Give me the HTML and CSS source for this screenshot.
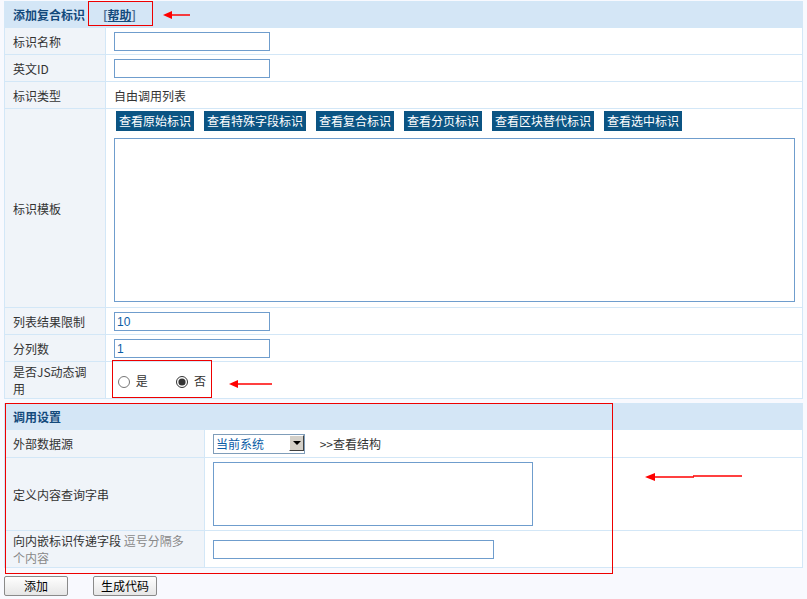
FILE: index.html
```html
<!DOCTYPE html>
<html lang="zh-CN">
<head>
    <meta charset="UTF-8">
    <title>添加复合标识</title>
    <link rel="stylesheet" href="styles.css">
</head>
<body>
<div class="page">
    <!-- 基本信息 -->
    <table class="form-table">
        <colgroup><col class="c-label"><col></colgroup>
        <tr class="head">
            <th colspan="2">添加复合标识<span class="help">[<a href="#">帮助</a>]</span></th>
        </tr>
        <tr>
            <td class="label">标识名称</td>
            <td><input type="text" class="txt"></td>
        </tr>
        <tr>
            <td class="label">英文ID</td>
            <td><input type="text" class="txt"></td>
        </tr>
        <tr>
            <td class="label">标识类型</td>
            <td>自由调用列表</td>
        </tr>
        <tr>
            <td class="label">标识模板</td>
            <td class="tpl">
                <div class="tpl-btns">
                    <a href="#" class="tag-btn">查看原始标识</a>
                    <a href="#" class="tag-btn">查看特殊字段标识</a>
                    <a href="#" class="tag-btn">查看复合标识</a>
                    <a href="#" class="tag-btn">查看分页标识</a>
                    <a href="#" class="tag-btn">查看区块替代标识</a>
                    <a href="#" class="tag-btn">查看选中标识</a>
                </div>
                <textarea class="tpl-area"></textarea>
            </td>
        </tr>
        <tr>
            <td class="label">列表结果限制</td>
            <td><input type="text" class="txt" value="10"></td>
        </tr>
        <tr>
            <td class="label">分列数</td>
            <td><input type="text" class="txt" value="1"></td>
        </tr>
        <tr class="tall">
            <td class="label">是否JS动态调用</td>
            <td class="radios">
                <label><input type="radio" name="isjs"> 是</label>
                <label><input type="radio" name="isjs" checked> 否</label>
            </td>
        </tr>
    </table>

    <!-- 调用设置 -->
    <table class="form-table call-table">
        <colgroup><col class="c-label2"><col></colgroup>
        <tr class="head">
            <th colspan="2">调用设置</th>
        </tr>
        <tr class="src-row">
            <td class="label">外部数据源</td>
            <td>
                <span class="sel">
                    <select><option>当前系统</option></select>
                    <span class="sel-arrow"></span>
                </span>
                <a href="#" class="struct">&gt;&gt;查看结构</a>
            </td>
        </tr>
        <tr class="query-row">
            <td class="label">定义内容查询字串</td>
            <td><textarea class="query-area"></textarea></td>
        </tr>
        <tr class="pass-row">
            <td class="label">向内嵌标识传递字段 <span class="hint">逗号分隔多</span><br><span class="hint">个内容</span></td>
            <td><input type="text" class="txt long"></td>
        </tr>
    </table>

    <div class="actions">
        <button class="btn">添加</button>
        <button class="btn">生成代码</button>
    </div>

    <!-- 标注 -->
    <div class="mark mark-help"></div>
    <div class="mark mark-radio"></div>
    <div class="mark mark-call"></div>
    <svg class="arrow arrow-help" width="28" height="10" viewBox="0 0 28 10">
        <path d="M0 5 L9 1 L9 9 Z" fill="#f00"/>
        <line x1="8" y1="5" x2="27" y2="5" stroke="#f00" stroke-width="1.5"/>
    </svg>
    <svg class="arrow arrow-radio" width="44" height="10" viewBox="0 0 44 10">
        <path d="M0 5 L9 1 L9 9 Z" fill="#f00"/>
        <line x1="8" y1="5" x2="43" y2="5" stroke="#f00" stroke-width="1.5"/>
    </svg>
    <svg class="arrow arrow-call" width="98" height="10" viewBox="0 0 98 10">
        <path d="M0 6 L10 2 L10 10 Z" fill="#f00"/>
        <line x1="9" y1="6" x2="49" y2="6" stroke="#f00" stroke-width="1.5"/>
        <line x1="48" y1="5" x2="97" y2="5" stroke="#f00" stroke-width="1.5"/>
    </svg>
</div>
</body>
</html>
```

FILE: styles.css
```css
body {
    margin: 0;
    padding: 1px 4px;
    background-color: #f8f9fe;
    font-family: "Noto Sans CJK SC", "Liberation Sans", sans-serif;
    font-size: 12px;
    color: #333;
}

.page {
    position: relative;
    width: 799px;
}

.form-table {
    width: 799px;
    border-collapse: collapse;
    table-layout: fixed;
    background-color: #fff;
}
.form-table .c-label {
    width: 101px;
}
.form-table .c-label2 {
    width: 200px;
}
.form-table th,
.form-table td {
    border: 1px solid #d3e7f7;
    padding: 0 8px;
    height: 26px;
    text-align: left;
    line-height: 17px;
}
.form-table .head th {
    background-color: #d4e6f6;
    color: #134a7c;
    font-weight: bold;
    height: 25px;
}
.help {
    margin-left: 18px;
    color: #4d6f92;
}
.help a {
    color: #134a7c;
    text-decoration: underline;
}
.form-table td.label {
    background-color: #f0f4f9;
}

.txt {
    box-sizing: border-box;
    width: 156px;
    height: 19px;
    margin: 0;
    padding: 0 2px;
    border: 1px solid #6f9dcd;
    font-family: "Liberation Sans", sans-serif;
    font-size: 12px;
    color: #0b5ca6;
    vertical-align: middle;
}
.txt.long {
    width: 281px;
}

/* 模板按钮与编辑区 */
.form-table td.tpl {
    padding: 2px 8px 5px 8px;
}
.tpl-btns {
    display: flex;
    gap: 10px;
    padding-left: 2px;
}
.tag-btn {
    display: inline-block;
    background-color: #0b5483;
    color: #fff;
    text-decoration: none;
    line-height: 16px;
    padding: 2px 3px;
}
.tpl-area {
    display: block;
    box-sizing: border-box;
    width: 681px;
    height: 164px;
    margin: 7px 0 0 0;
    border: 1px solid #6f9dcd;
    resize: none;
}

.form-table .tall td {
    height: 36px;
}
.radios label {
    margin-left: 4px;
    margin-right: 22px;
}
.radios input {
    margin: 0 3px 0 0;
    width: 12px;
    height: 12px;
    vertical-align: -2px;
    accent-color: #333;
}

/* 调用设置 */
.call-table {
    margin-top: 4px;
}
.src-row td {
    height: 27px;
}
.sel {
    position: relative;
    display: inline-block;
    vertical-align: middle;
}
.sel select {
    appearance: none;
    box-sizing: border-box;
    width: 92px;
    height: 20px;
    margin: 0;
    padding: 0 2px;
    border: 1px solid #7f9db9;
    border-radius: 0;
    background-color: #fff;
    font-family: "Noto Sans CJK SC", sans-serif;
    font-size: 12px;
    color: #0b5ca6;
}
.sel-arrow {
    position: absolute;
    right: 1px;
    top: 1px;
    width: 15px;
    height: 16px;
    background-color: #d4d0c8;
    border: 1px solid;
    border-color: #fff #404040 #404040 #fff;
    box-sizing: border-box;
    pointer-events: none;
}
.sel-arrow::after {
    content: "";
    position: absolute;
    left: 3px;
    top: 5px;
    border-left: 4px solid transparent;
    border-right: 4px solid transparent;
    border-top: 4px solid #000;
}
.struct {
    margin-left: 12px;
    color: #333;
    text-decoration: none;
    vertical-align: middle;
}
.query-row td {
    height: 72px;
}
.query-area {
    display: block;
    box-sizing: border-box;
    width: 320px;
    height: 64px;
    margin: 0;
    border: 1px solid #6f9dcd;
    resize: none;
}
.pass-row td {
    height: 36px;
}
.hint {
    color: #888;
}

.actions {
    display: flex;
    gap: 25px;
    margin-top: 8px;
}
.btn {
    box-sizing: border-box;
    width: 64px;
    height: 20px;
    padding: 0;
    border: 1px solid #8a8a8a;
    border-radius: 2px;
    background: linear-gradient(#fefefe, #e6e6e6);
    font-family: "Noto Sans CJK SC", sans-serif;
    font-size: 12px;
    line-height: 16px;
    color: #000;
}

/* 红色标注 */
.mark {
    position: absolute;
    border: 1px solid #e00;
    pointer-events: none;
}
.mark-help {
    left: 84px;
    top: 0;
    width: 63px;
    height: 23px;
}
.mark-radio {
    left: 108px;
    top: 359px;
    width: 98px;
    height: 36px;
}
.mark-call {
    left: 1px;
    top: 402px;
    width: 606px;
    height: 169px;
}
.arrow {
    position: absolute;
}
.arrow-help {
    left: 159px;
    top: 9px;
}
.arrow-radio {
    left: 225px;
    top: 378px;
}
.arrow-call {
    left: 641px;
    top: 470px;
}
```
